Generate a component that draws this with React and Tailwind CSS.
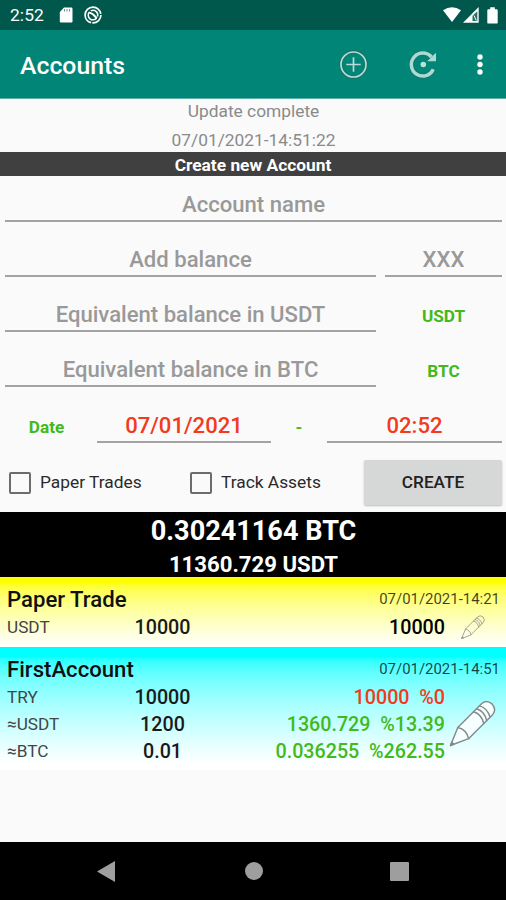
const GREEN = 'text-[#43b91c]';
const RED = 'text-[#f23a1d]';

function StatusBar() {
  return (
    <div className="flex h-[30px] items-center bg-[#00574b] pl-[10px] pr-[8px] text-white">
      <span className="w-[35px] pt-px text-[17.4px] leading-none tracking-[0.1px]">2:52</span>
      <svg className="ml-[14px]" width="14" height="16" viewBox="0 0 14 16">
        <path d="M5 0.5H12.3Q13.5 0.5 13.5 1.7V14.3Q13.5 15.5 12.3 15.5H2Q0.8 15.5 0.8 14.3V5Z" fill="currentColor" />
        <path d="M5.5 2v2.5M8 2v2.5M10.5 2v2.5" stroke="#00574b" strokeWidth="1" opacity=".6" />
      </svg>
      <svg className="ml-[11px]" width="18" height="18" viewBox="0 0 18 18" fill="none" stroke="currentColor">
        <circle cx="9" cy="9" r="7.9" strokeWidth="1.7" strokeDasharray="13 1.2 34 1.4" />
        <path d="M5.2 6.2A4.7 4.7 0 1 0 12.6 12" strokeWidth="1.5" />
        <path d="M6.8 4.9A4.7 4.7 0 0 1 13.5 10.5" strokeWidth="1.5" />
        <path d="M5 6.3L9 8.2L12.8 12.2" strokeWidth="2" />
      </svg>
      <div className="ml-auto flex items-center">
        <svg width="18" height="16" viewBox="0 0 18 16">
          <path d="M0 3.2Q9 -2.6 18 3.2L9 15Z" fill="currentColor" />
        </svg>
        <svg className="ml-[2px]" width="16" height="16" viewBox="0 0 16 16">
          <path d="M0 15.7L15.7 0V15.7Z" fill="currentColor" />
          <path d="M9.5 8.8L14.3 4.3V14H9.5Z" fill="#00574b" opacity=".85" />
          <path d="M11 8.5L13.3 13.5" stroke="currentColor" strokeWidth="1" />
        </svg>
        <svg className="ml-[8px]" width="11" height="17" viewBox="0 0 11 17">
          <path d="M3.2 0.3h4.6v2H9.6q1.1 0 1.1 1.1v12q0 1.2-1.1 1.2H1.4q-1.1 0-1.1-1.2v-12q0-1.1 1.1-1.1h1.8z" fill="currentColor" />
        </svg>
      </div>
    </div>
  );
}

function AppBar() {
  return (
    <div className="flex h-[69px] items-center border-b border-[#5db0a6] bg-[#008577] pl-5 pr-[23px]">
      <h1 className="pt-[4px] text-[24.8px] font-medium leading-none text-white">Accounts</h1>
      <svg className="ml-auto" width="30" height="30" viewBox="0 0 30 30" fill="none">
        <circle cx="15.5" cy="15.5" r="12.7" stroke="#1e6d63" strokeWidth="3" />
        <circle cx="15.5" cy="15.5" r="12.5" stroke="#b5dcd7" strokeWidth="1.7" />
        <path d="M15.5 8.3V22.7M8.3 15.5H22.7" stroke="#b5dcd7" strokeWidth="1.7" />
      </svg>
      <svg className="ml-10" width="30" height="30" viewBox="0 0 30 30" fill="none">
        <path d="M25.3 20.3A11.5 11.5 0 1 1 23.5 8" stroke="#1e6d63" strokeWidth="4.8" />
        <path d="M25.3 20.3A11.5 11.5 0 1 1 23.5 8" stroke="#a9dbd4" strokeWidth="3.5" />
        <path d="M28 3.8V12.3H19.2Z" fill="#a9dbd4" />
        <circle cx="15.3" cy="15.5" r="2.8" fill="#b5e3dc" />
      </svg>
      <svg className="ml-[39px]" width="6" height="22" viewBox="0 0 6 22" fill="#fff">
        <circle cx="3" cy="4" r="2.7" />
        <circle cx="3" cy="11.5" r="2.7" />
        <circle cx="3" cy="19" r="2.7" />
      </svg>
    </div>
  );
}

function Field({ className, children }) {
  return (
    <div
      className={`flex h-[37px] items-center justify-center border-b-2 border-[#a3a3a3] pt-[4px] text-[22.1px] font-medium leading-none ${className}`}
    >
      {children}
    </div>
  );
}

function CheckOption({ className, label }) {
  return (
    <label className={`flex items-center ${className}`}>
      <span className="h-[22px] w-[22px] rounded-[2px] border-2 border-[#6c6c6c]" />
      <span className="ml-[9px] whitespace-nowrap pt-px text-[17.35px] leading-none text-[#2a2a2a]">{label}</span>
    </label>
  );
}

function NewAccountForm() {
  return (
    <div className="h-[336px] pl-[5px] pr-1 text-[#999]">
      <div className="flex h-[46px] items-end">
        <Field className="w-[497px]">Account name</Field>
      </div>
      <div className="flex h-[55px] items-end justify-between">
        <Field className="w-[371px]">Add balance</Field>
        <Field className="w-[117px]">XXX</Field>
      </div>
      <div className="flex h-[55px] items-end">
        <Field className="w-[371px]">Equivalent balance in USDT</Field>
        <span className={`mb-[7px] ml-[9px] w-[117px] text-center text-[17.2px] font-bold leading-none ${GREEN}`}>USDT</span>
      </div>
      <div className="flex h-[55px] items-end">
        <Field className="w-[371px]">Equivalent balance in BTC</Field>
        <span className={`mb-[7px] ml-[9px] w-[117px] text-center text-[17.2px] font-bold leading-none ${GREEN}`}>BTC</span>
      </div>
      <div className={`flex h-[56px] items-end ${RED}`}>
        <span className={`mb-[7px] w-[83px] text-center text-[17.2px] font-bold leading-none ${GREEN}`}>Date</span>
        <Field className="ml-[9px] w-[174px]">07/01/2021</Field>
        <span className={`mb-[7px] w-[56px] text-center text-[17.2px] font-bold leading-none ${GREEN}`}>-</span>
        <Field className="w-[175px]">02:52</Field>
      </div>
      <div className="mt-[17px] flex items-center">
        <CheckOption className="ml-[4px] w-[181px]" label="Paper Trades" />
        <CheckOption className="w-[174px]" label="Track Assets" />
        <button className="h-[45px] w-[138px] rounded-[2px] bg-[#d6d7d7] pt-px text-[17.2px] font-medium leading-none text-[#222] shadow-[0_1px_2px_#bbb]">
          CREATE
        </button>
      </div>
    </div>
  );
}

function Pencil({ className, size, color, fill, strokeWidth }) {
  return (
    <svg
      className={className}
      width={size}
      height={size}
      viewBox="0 0 48 48"
      fill={fill}
      stroke={color}
      strokeWidth={strokeWidth}
      strokeLinejoin="round"
      strokeLinecap="round"
    >
      <path d="M1.5 46.5L9 28L33 4Q38 -1 44 4Q49 10 44.5 15L20 39.5Z" />
      <path d="M9 28Q18 30 20 39.5" fill="none" />
      <path d="M1.5 46.5L2.8 43.2L5 45Z" fill={color} />
      <path d="M25 12Q33 14 35.5 24M28 9Q36 11 38.5 21M31 6Q39 8 42 17.500" />
    </svg>
  );
}

function AccountRow({ label, amount, children }) {
  return (
    <div className="flex h-[27px] items-center leading-none">
      <span className="w-[106px] text-[17.2px] text-[#444]">{label}</span>
      <span className="w-[99px] text-center text-[19.7px] font-medium text-[#1a1a1a]">{amount}</span>
      <span className="ml-auto whitespace-pre text-[19.7px] font-medium">{children}</span>
    </div>
  );
}

function AccountHeader({ name, date }) {
  return (
    <div className="flex h-[26px] items-center justify-between leading-none">
      <span className="text-[22.15px] font-medium text-[#101010]">{name}</span>
      <span className="text-[14.95px] text-black/75">{date}</span>
    </div>
  );
}

export default function App() {
  return (
    <div className="flex h-[900px] w-[506px] flex-col overflow-hidden bg-[#fafafa] font-[Roboto,sans-serif]">
      <StatusBar />
      <AppBar />
      <div className="flex h-[53px] flex-col items-center pl-px text-[17.35px] leading-[29px] text-[#8a8a8a]">
        <div className="-mt-[2px]">Update complete</div>
        <div>07/01/2021-14:51:22</div>
      </div>
      <div className="h-6 bg-[#404040] text-center text-[17.35px] font-bold leading-[26px] text-white">
        Create new Account
      </div>
      <NewAccountForm />
      <div className="flex h-[65px] flex-col items-center bg-black pl-px font-bold text-white">
        <div className="text-[27.1px] leading-[39px]">0.30241164 BTC</div>
        <div className="text-[22.15px] leading-[26px]">11360.729 USDT</div>
      </div>
      <div className="h-[70px] bg-linear-to-b from-[#ffff00] from-8% to-white pl-[7px] pr-[6px] pt-[9px]">
        <AccountHeader name="Paper Trade" date="07/01/2021-14:21" />
        <div className="flex items-center pt-[2px]">
          <div className="w-[438px]">
            <AccountRow label="USDT" amount="10000">10000</AccountRow>
          </div>
          <Pencil className="-mt-[2px] ml-[16px]" size="24" color="#999" fill="none" strokeWidth="1.8" />
        </div>
      </div>
      <div className="h-[123px] bg-linear-to-b from-[#00ffff] from-8% to-white to-95% pl-[7px] pr-[6px] pt-[9px]">
        <AccountHeader name="FirstAccount" date="07/01/2021-14:51" />
        <div className="flex items-center pt-[2px]">
          <div className={`w-[438px] ${GREEN}`}>
            <AccountRow label="TRY" amount="10000">
              <span className={RED}>{'10000  %0'}</span>
            </AccountRow>
            <AccountRow label="≈USDT" amount="1200">{'1360.729  %13.39'}</AccountRow>
            <AccountRow label="≈BTC" amount="0.01">{'0.036255  %262.55'}</AccountRow>
          </div>
          <Pencil className="-mt-[3px] ml-[4px] shrink-0" size="47" color="#858b8b" fill="#f5ffff" strokeWidth="1.5" />
        </div>
      </div>
      <div className="mt-auto flex h-[58px] items-center bg-black pl-[97px] text-[#9e9e9e]">
        <svg width="18" height="21" viewBox="0 0 18 21" fill="currentColor">
          <path d="M0 10.5L18 0V21Z" />
        </svg>
        <span className="ml-[130px] h-[18px] w-[18px] rounded-full bg-[#9e9e9e]" />
        <span className="ml-[127px] h-[19px] w-[19px] rounded-[1px] bg-[#9e9e9e]" />
      </div>
    </div>
  );
}
